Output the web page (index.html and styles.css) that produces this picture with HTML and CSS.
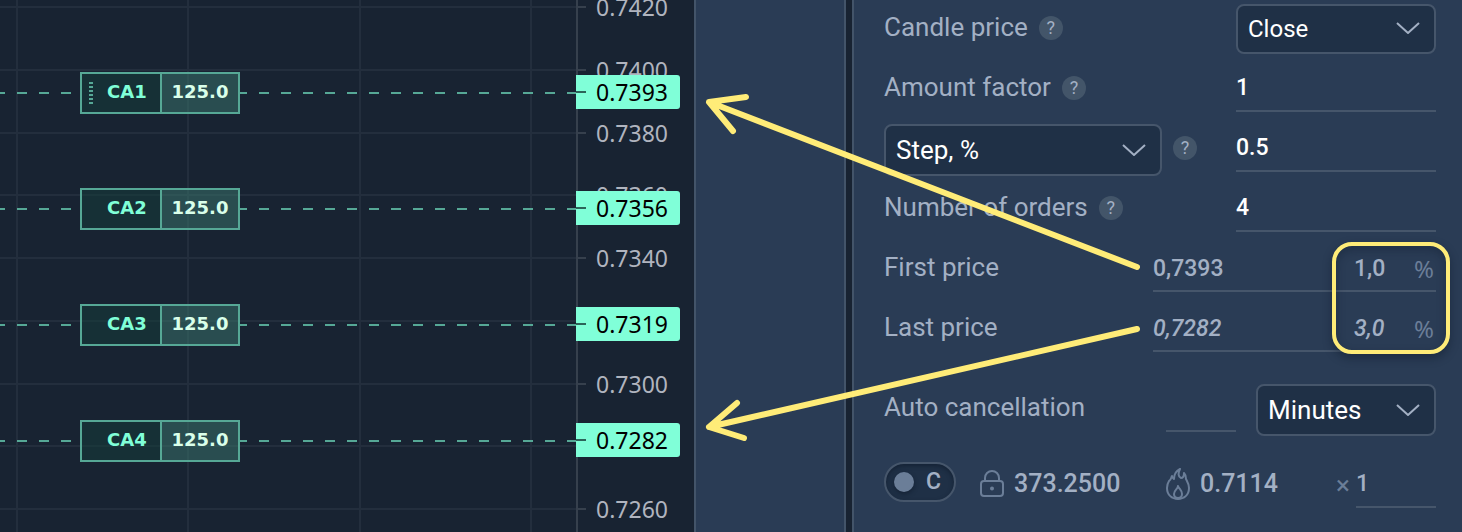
FILE: index.html
```html
<!DOCTYPE html>
<html lang="en">
  <head>
    <meta charset="UTF-8" />
    <title>Order ladder</title>
    <link rel="stylesheet" href="styles.css">
  </head>

  <body>
    <div class="app">
      <div class="chart">
        <div class="time-grid"><i></i><i></i><i></i><i></i></div>
        <div class="levels">
          <div class="level"><span>0.7420</span></div>
          <div class="level"><span>0.7400</span></div>
          <div class="level"><span>0.7380</span></div>
          <div class="level"><span>0.7360</span></div>
          <div class="level"><span>0.7340</span></div>
          <div class="level"><span>0.7320</span></div>
          <div class="level"><span>0.7300</span></div>
          <div class="level"><span>0.7280</span></div>
          <div class="level"><span>0.7260</span></div>
        </div>
        <div class="orders">
          <div class="order">
            <div class="order-tag">
              <span class="order-name"><i class="grip"></i>CA1</span>
              <span class="order-amount">125.0</span>
            </div>
            <div class="order-price">0.7393</div>
          </div>
          <div class="order">
            <div class="order-tag">
              <span class="order-name">CA2</span>
              <span class="order-amount">125.0</span>
            </div>
            <div class="order-price">0.7356</div>
          </div>
          <div class="order">
            <div class="order-tag">
              <span class="order-name">CA3</span>
              <span class="order-amount">125.0</span>
            </div>
            <div class="order-price">0.7319</div>
          </div>
          <div class="order">
            <div class="order-tag">
              <span class="order-name">CA4</span>
              <span class="order-amount">125.0</span>
            </div>
            <div class="order-price">0.7282</div>
          </div>
        </div>
      </div>

      <div class="dock"></div>

      <form class="panel">
        <div class="row row-first">
          <label for="candle">Candle price</label>
          <button type="button" class="help">?</button>
          <div class="select select-medium">
            <select id="candle">
              <option>Close</option>
              <option>Open</option>
            </select>
            <svg viewBox="0 0 24 12"><path d="M1 1l11 10L23 1" /></svg>
          </div>
        </div>
        <div class="row">
          <label for="factor">Amount factor</label>
          <button type="button" class="help">?</button>
          <input id="factor" class="field" type="text" value="1" />
        </div>
        <div class="row">
          <div class="select select-wide">
            <select id="step-type" aria-label="Step type">
              <option>Step, %</option>
              <option>Step</option>
            </select>
            <svg viewBox="0 0 24 12"><path d="M1 1l11 10L23 1" /></svg>
          </div>
          <button type="button" class="help">?</button>
          <input class="field" type="text" value="0.5" aria-label="Step" />
        </div>
        <div class="row">
          <label for="count">Number of orders</label>
          <button type="button" class="help">?</button>
          <input id="count" class="field" type="text" value="4" />
        </div>
        <div class="row">
          <label for="first">First price</label>
          <div class="price-pair">
            <input id="first" class="price" type="text" value="0,7393" />
            <input id="first-pct" class="percent" type="text" value="1,0" />
            <label for="first-pct">%</label>
          </div>
        </div>
        <div class="row">
          <label for="last">Last price</label>
          <div class="price-pair computed">
            <input id="last" class="price" type="text" value="0,7282" />
            <input id="last-pct" class="percent" type="text" value="3,0" />
            <label for="last-pct">%</label>
          </div>
        </div>
        <div class="row row-cancel">
          <label for="cancel">Auto cancellation</label>
          <input id="cancel" class="field field-short" type="text" />
          <div class="select select-small">
            <select id="unit" aria-label="Time unit">
              <option>Minutes</option>
              <option>Hours</option>
            </select>
            <svg viewBox="0 0 24 12"><path d="M1 1l11 10L23 1" /></svg>
          </div>
        </div>
        <div class="row row-summary">
          <label class="toggle"><input type="checkbox" />C</label>
          <div class="stat">
            <svg width="24" height="28" viewBox="0 0 24 28">
              <rect x="1" y="11" width="22" height="15" rx="3" />
              <path d="M5 11V8a7 7 0 0 1 14 0v3" />
              <circle cx="12" cy="18.500" r="1" />
            </svg>
            <span>373.2500</span>
          </div>
          <div class="stat">
            <svg width="24" height="32" viewBox="0 0 24 32">
              <path d="M14 1C10 3 8 6 8 11C6 10 6 9 6 8C5 10 5 12 3 13C1 16 1 18 1 20C1 27 6 31 12 31C18 31 23 27 23 20C23 16 21 13 20 11C20 8 19 6 18 5C18 8 17 10 15 10C12 9 12 5 14 1Z" />
              <path d="M12 18C12 21 8 22 8 26C8 29 10 30 12 30C14 30 16 29 16 26C16 22 13 21 12 18Z" />
            </svg>
            <span>0.7114</span>
          </div>
          <label class="times" for="multiplier">×</label>
          <input id="multiplier" class="multiplier" type="text" value="1" />
        </div>
        <div class="highlight"></div>
      </form>

      <svg class="arrows" width="768" height="532" viewBox="694 0 768 532">
        <path d="M1137 267L709 102M746 97L709 102L733 131" />
        <path d="M1137 329L709 427M737 403L709 427L744 438" />
      </svg>
    </div>
  </body>
</html>
```

FILE: styles.css
```css
* {
  box-sizing: border-box;
}

body {
  margin: 0;
  background: #182332;
  color: #a3b0c4;
  font-family: Roboto, "Noto Sans", sans-serif;
  font-size: 26px;
}

input,
select,
button {
  margin: 0;
  padding: 0;
  border: 0;
  border-radius: 0;
  outline: none;
  background: none;
  color: inherit;
  font: inherit;
}

.app {
  position: relative;
  display: flex;
  min-height: 100vh;
  overflow: hidden;
}

/* chart */

.chart {
  position: relative;
  flex: 1;
  min-width: 400px;
  font-family: "Noto Sans", sans-serif;
  font-size: 23px;
}

.time-grid {
  position: absolute;
  top: 0;
  bottom: 0;
  left: 0;
  right: 116px;
  display: flex;
  justify-content: space-between;
  padding: 0 44px 0 16px;
  border-right: 2px solid #36404d;
}

.time-grid i {
  width: 2px;
  background: #232e3d;
}

/* runs past the top edge, the scale starts halfway through a label */
.levels {
  position: absolute;
  top: -7px;
  bottom: 9px;
  left: 0;
  right: 0;
  display: flex;
  flex-direction: column;
  justify-content: space-between;
  color: #b0b4bf;
}

.level {
  display: flex;
  align-items: center;
  gap: 10px;
  height: 28px;
  line-height: 28px;
}

.level::before {
  content: "";
  flex: 1;
  height: 2px;
  background: linear-gradient(to left, #36404d 10px, #232e3d 10px);
}

.level span {
  width: 98px;
}

.orders {
  position: relative;
  display: flex;
  flex-direction: column;
  gap: 74px;
  padding-top: 72px;
}

.order {
  display: flex;
  align-items: center;
  height: 42px;
}

.order::before {
  content: "";
  width: 80px;
  height: 2px;
  background: repeating-linear-gradient(to right, #56a896 0 5px, transparent 5px 17px, #56a896 17px 22px);
}

.order::after {
  content: "";
  order: 1;
  flex: 1;
  height: 2px;
  background: repeating-linear-gradient(to right, #56a896 0 7px, transparent 7px 19px, #56a896 19px 22px);
}

.order-tag {
  display: flex;
  width: 160px;
  height: 42px;
  border: 2px solid #56a896;
  font: bold 18px/36px "DejaVu Sans", Verdana, sans-serif;
}

.order-name {
  position: relative;
  flex: 1;
  padding-left: 25px;
  background: rgba(20, 61, 58, 0.5);
  color: #80ffd8;
}

.grip {
  position: absolute;
  left: 7px;
  top: 8px;
  width: 4px;
  height: 22px;
  background: repeating-linear-gradient(#56a896 0 2px, transparent 2px 4px);
}

.order-amount {
  width: 78px;
  border-left: 2px solid #56a896;
  background: rgba(58, 119, 110, 0.5);
  color: #d9ffea;
  text-align: center;
}

.order-price {
  order: 2;
  display: flex;
  align-items: center;
  gap: 10px;
  width: 104px;
  height: 34px;
  margin: 0 14px 2px 0;
  border-radius: 0 3px 3px 0;
  background: #80ffd8;
  color: #000;
}

.order-price::before {
  content: "";
  width: 10px;
  height: 2px;
  background: #2c6459;
}

/* side columns */

.dock {
  width: 152px;
  margin-right: 6px;
  border: solid #435469;
  border-width: 0 2px;
  background: #2a3c55;
}

.panel {
  position: relative;
  width: 610px;
  padding: 0 26px 24px 30px;
  border-left: 2px solid #435469;
  background: #2a3c55;
}

.row {
  display: flex;
  align-items: flex-start;
  height: 60px;
  padding-top: 12px;
  line-height: 46px;
}

.row-first {
  height: 52px;
  padding-top: 4px;
}

.row-cancel {
  margin-top: 20px;
}

.row-summary {
  margin-top: 16px;
}

.help {
  width: 24px;
  height: 24px;
  margin: 12px 0 0 11px;
  border-radius: 50%;
  background: #435569;
  color: #a3b0c4;
  font-size: 18px;
  line-height: 24px;
}

.field {
  width: 200px;
  height: 48px;
  margin-left: auto;
  border-bottom: 2px solid #46566b;
  color: #fff;
  font-size: 23px;
  font-weight: 500;
}

.field-short {
  width: 70px;
}

.select {
  position: relative;
  height: 52px;
}

.select select {
  appearance: none;
  width: 100%;
  height: 100%;
  padding: 0 48px 0 10px;
  border: 2px solid #46566b;
  border-radius: 8px;
  background: #1f3046;
  color: #fff;
}

.select svg {
  position: absolute;
  top: 20px;
  right: 16px;
  width: 24px;
  height: 12px;
  fill: none;
  stroke: #a3b0c4;
  stroke-width: 2;
  pointer-events: none;
}

.select-wide {
  width: 278px;
}

.select-medium {
  width: 200px;
  height: 50px;
  margin-left: auto;
  font-size: 24px;
}

.select-medium svg {
  top: 18px;
}

.select-small {
  width: 180px;
  margin-left: 20px;
}

.price-pair {
  display: flex;
  width: 283px;
  height: 48px;
  margin-left: auto;
  border-bottom: 2px solid #46566b;
  font-size: 23px;
}

.price-pair input {
  height: 48px;
  font-weight: 500;
}

.price {
  flex: 1;
  min-width: 0;
}

.percent {
  width: 60px;
}

.price-pair label {
  width: 22px;
  padding-top: 2px;
  color: #6b7e98;
  font-family: "Noto Sans", sans-serif;
  font-size: 24px;
}

.computed input {
  font-style: italic;
}

.toggle {
  display: flex;
  align-items: center;
  gap: 12px;
  width: 72px;
  height: 40px;
  margin: 2px 24px 0 0;
  padding-left: 8px;
  border: 2px solid #46566b;
  border-radius: 20px;
  background: #1f3046;
  box-shadow: inset 0 2px 4px rgba(10, 20, 35, 0.5);
  font-size: 23px;
  font-weight: 500;
}

.toggle input {
  appearance: none;
  width: 20px;
  height: 20px;
  border-radius: 50%;
  background: #6b7e98;
  box-shadow: 0 2px 4px rgba(10, 20, 35, 0.5);
}

.stat {
  display: flex;
  align-items: center;
  gap: 10px;
  height: 48px;
  font-size: 25px;
  font-weight: 500;
}

.toggle + .stat {
  width: 186px;
}

.stat svg {
  fill: none;
  stroke: #6b7e98;
  stroke-width: 2;
  stroke-linejoin: round;
}

.times {
  margin-left: auto;
  padding: 2px 6px 0 0;
  color: #6b7e98;
}

.multiplier {
  width: 80px;
  height: 48px;
  border-bottom: 2px solid #46566b;
  font-size: 23px;
  font-weight: 500;
}

/* annotations over the form */

.highlight {
  position: absolute;
  top: 242px;
  right: 12px;
  width: 118px;
  height: 112px;
  border: 4px solid #ffec78;
  border-radius: 20px;
  box-shadow: 0 4px 10px rgba(10, 20, 35, 0.4), inset 0 4px 10px rgba(10, 20, 35, 0.3);
  pointer-events: none;
}

.arrows {
  position: absolute;
  top: 0;
  right: 0;
  fill: none;
  stroke: #ffec78;
  stroke-width: 6;
  stroke-linecap: round;
  stroke-linejoin: round;
  pointer-events: none;
}
```
